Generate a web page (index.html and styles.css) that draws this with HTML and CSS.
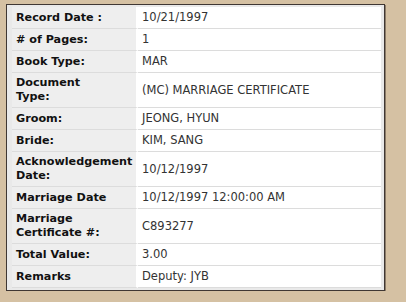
FILE: index.html
```html
<!DOCTYPE html>
<html lang="en">
<head>
    <meta charset="UTF-8">
    <meta name="viewport" content="width=device-width, initial-scale=1.0">
    <title>Record Detail</title>
    <link rel="stylesheet" href="styles.css">
</head>
<body>
    <div class="painel">
        <table class="detalhe">
            <tr><th>Record Date :</th><td>10/21/1997</td></tr>
            <tr><th># of Pages:</th><td>1</td></tr>
            <tr><th>Book Type:</th><td>MAR</td></tr>
            <tr class="dupla"><th>Document<br>Type:</th><td>(MC) MARRIAGE CERTIFICATE</td></tr>
            <tr><th>Groom:</th><td>JEONG, HYUN</td></tr>
            <tr><th>Bride:</th><td>KIM, SANG</td></tr>
            <tr class="dupla"><th>Acknowledgement<br>Date:</th><td>10/12/1997</td></tr>
            <tr><th>Marriage Date</th><td>10/12/1997 12:00:00 AM</td></tr>
            <tr class="dupla"><th>Marriage<br>Certificate #:</th><td>C893277</td></tr>
            <tr><th>Total Value:</th><td>3.00</td></tr>
            <tr><th>Remarks</th><td>Deputy: JYB</td></tr>
        </table>
    </div>
</body>
</html>
```

FILE: styles.css
```css
* {
    padding: 0;
    margin: 0;
    box-sizing: border-box;
}

body {
    background-color: #d5c1a3;
    font-family: 'DejaVu Sans', Verdana, sans-serif;
    font-size: 11.5px;
    color: #222222;
    padding: 4px 0 0 6px;
}

.painel {
    width: 379px;
    height: 287px;
    background-color: #e9e9e9;
    border: 1px solid #3f3733;
    box-shadow: 1px 1px 0 #8c7c68;
    padding: 2px 3px 0 5px;
}

.detalhe {
    width: 100%;
    table-layout: fixed;
    border-collapse: separate;
    border-spacing: 0;
    background-color: #ffffff;
}

.detalhe th,
.detalhe td {
    text-align: left;
    vertical-align: middle;
    padding: 3px 4px;
    line-height: 15px;
    border-bottom: 1px solid #dcdcdc;
}

.detalhe .dupla th {
    line-height: 14px;
    white-space: nowrap;
}

.detalhe th {
    width: 126px;
    font-size: 11.2px;
    font-weight: bold;
    color: #111111;
    background-color: #eeeeee;
    border-right: 2px solid #ffffff;
}

.detalhe td {
    font-weight: normal;
    color: #333333;
}
```
